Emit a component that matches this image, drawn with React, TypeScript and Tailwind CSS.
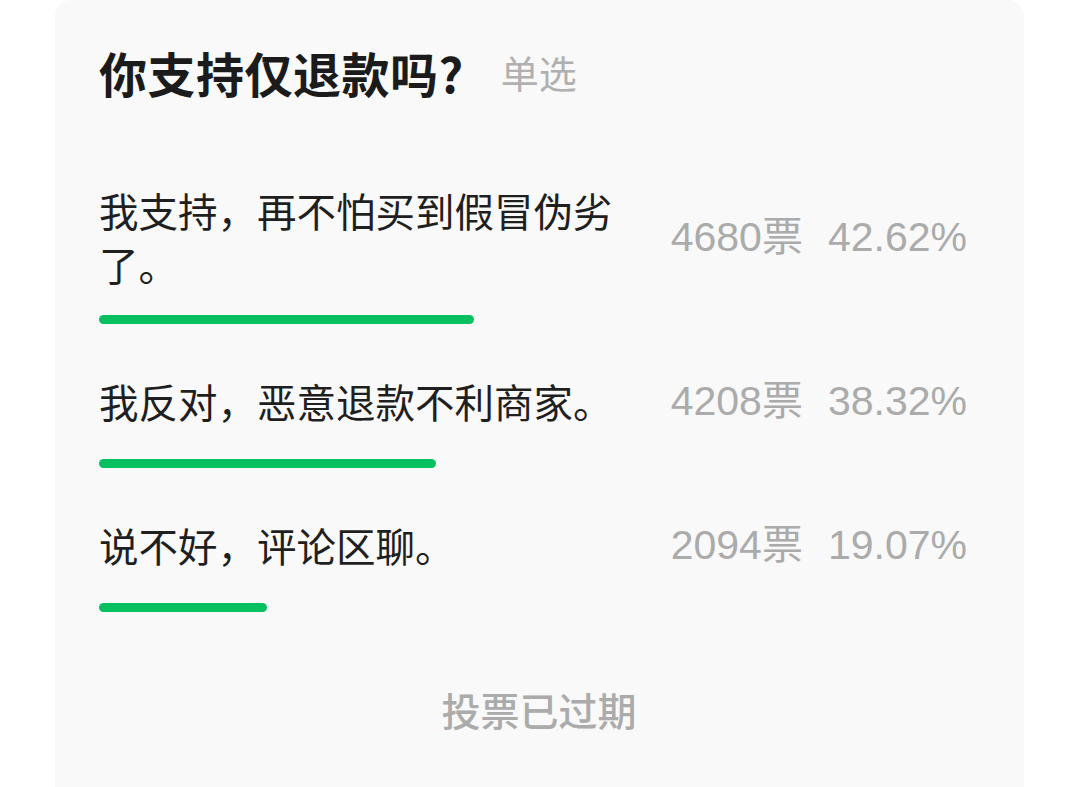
const cjk = { fontFamily: '"Noto Sans CJK SC", "Noto Sans", sans-serif' };
const num = { fontFamily: '"Liberation Sans", "Noto Sans CJK SC", sans-serif' };

interface PollOption {
  id: number;
  label: string;
  votes: number;
  percent: number;
}

const options: PollOption[] = [
  { id: 1, label: '我支持，再不怕买到假冒伪劣了。', votes: 4680, percent: 42.62 },
  { id: 2, label: '我反对，恶意退款不利商家。', votes: 4208, percent: 38.32 },
  { id: 3, label: '说不好，评论区聊。', votes: 2094, percent: 19.07 },
];

export default function App() {
  return (
    <div className="min-h-screen bg-white overflow-hidden" style={cjk}>
      <div className="ml-[55px] w-[969px] min-h-[820px] rounded-t-[16px] bg-[#f9f9f9] pl-[44px] pr-[45px] pt-[38px]">
        {/* Header */}
        <div className="flex items-center h-[68px]">
          <h1 className="text-[48px] leading-[68px] font-bold text-[#1b1b1b] tracking-[0.5px]">
            你支持仅退款吗?
          </h1>
          <span className="ml-[37px] text-[38px] leading-[68px] text-[#b0b0b0]">单选</span>
        </div>

        {/* Options */}
        <div className="mt-[77px]">
          {options.map((o, i) => (
            <div key={o.id} className={i === 0 ? '' : 'mt-[43px]'}>
              <div className="flex items-center min-h-[68px]">
                <p className="w-[540px] text-[39.5px] leading-[54px] text-[#1f1f1f]">{o.label}</p>
                <div
                  className="flex-1 flex justify-end items-center text-[41px] leading-[54px] text-[#ababab] mr-[12px] whitespace-nowrap"
                  style={num}
                >
                  <span>{o.votes}票</span>
                  <span className="ml-[25px]">{o.percent.toFixed(2)}%</span>
                </div>
              </div>
              <div className="mt-[24px] h-[9px]">
                <div
                  className="h-full rounded-full bg-[#07c160]"
                  style={{ width: `${(o.percent / 100) * 880}px` }}
                />
              </div>
            </div>
          ))}
        </div>

        {/* Footer */}
        <div className="mt-[69px] text-center text-[39px] leading-[56px] font-medium text-[#ababab]">
          投票已过期
        </div>
      </div>
    </div>
  );
}
